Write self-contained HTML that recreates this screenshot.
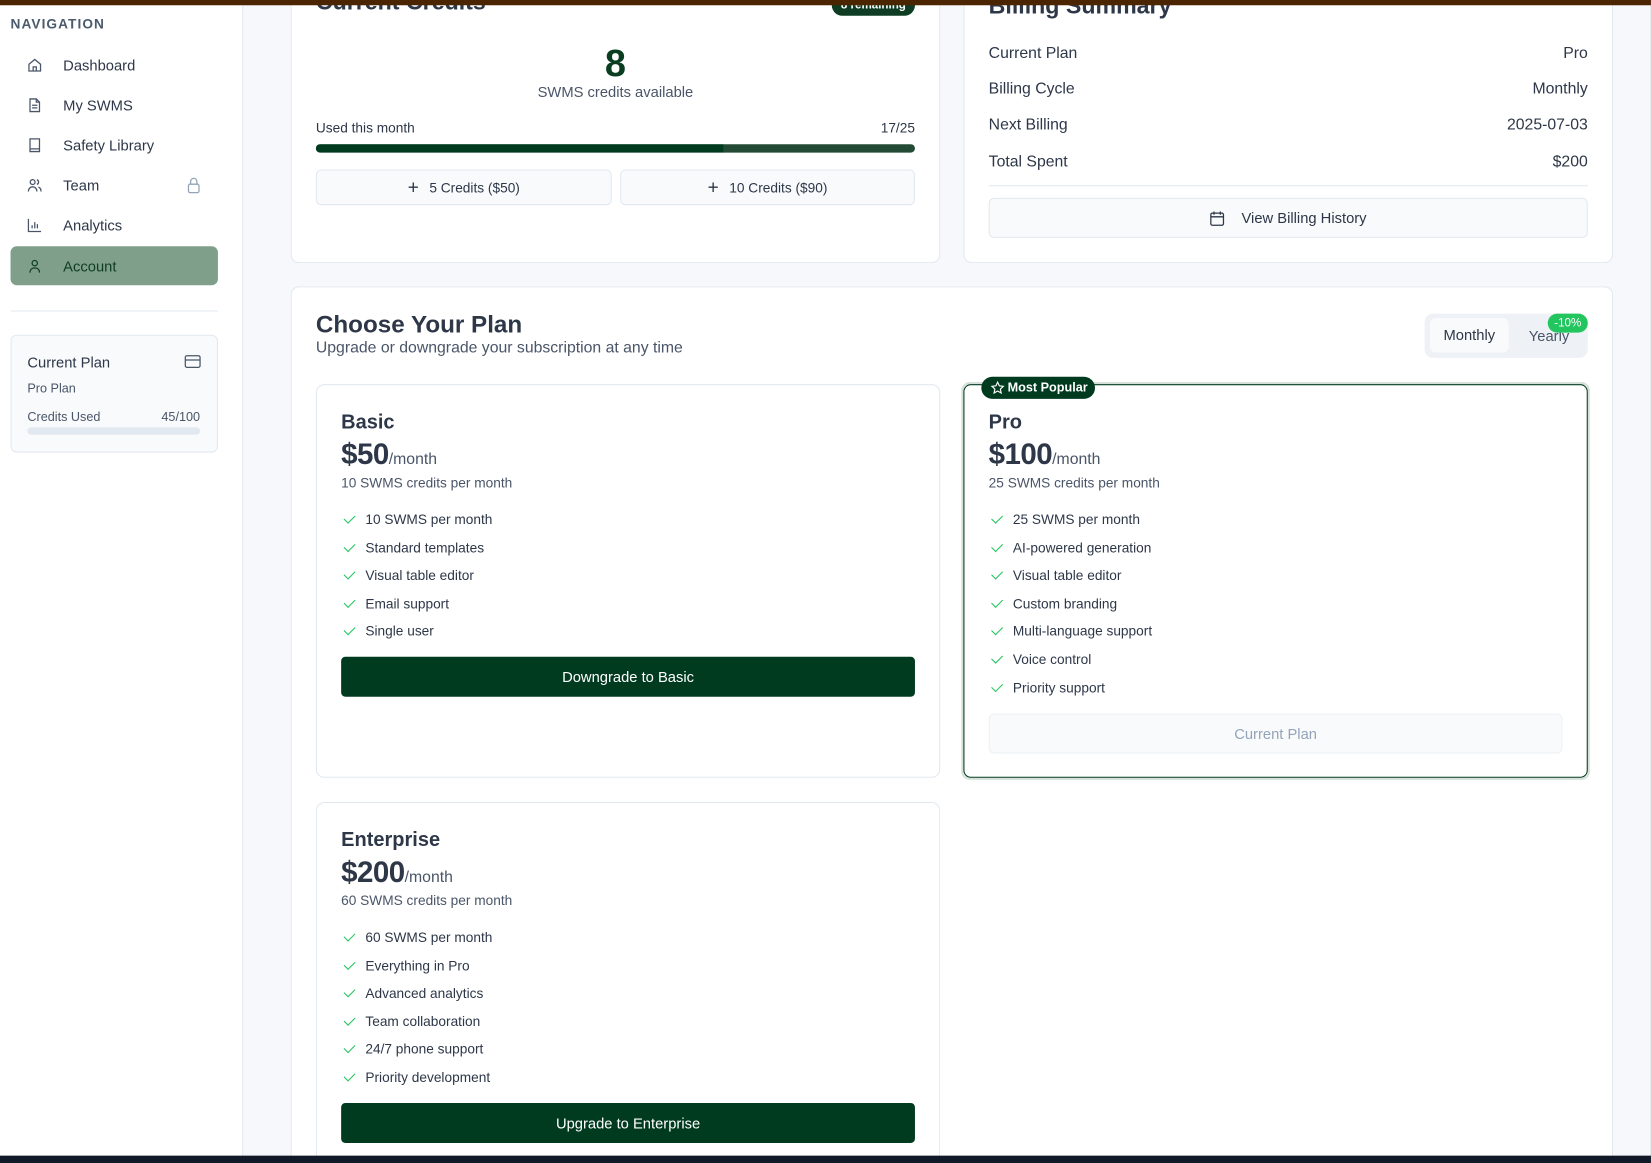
<!DOCTYPE html>
<html><head><meta charset="utf-8">
<style>
*{box-sizing:border-box;margin:0;padding:0}
html,body{width:1651px;height:1163px;overflow:hidden;background:#111827;font-family:"Liberation Sans",sans-serif;color:#2d3748}
#w{position:absolute;left:0;top:0;width:1568px;height:1105px;transform:scale(1.0529,1.0525);transform-origin:0 0;background:#f7f8fb;overflow:hidden}
.a{position:absolute}
.sb{left:0;top:0;width:231px;height:1105px;background:#fff;border-right:1px solid #e2e8f0}
.nav{left:10px;width:197px;height:38px;border-radius:6px;font-size:14px;color:#2d3748;line-height:38px;padding-left:50px}
.nav svg{position:absolute;left:16px;top:12px}
.card{background:#fff;border:1px solid #e2e8f0;border-radius:8px}
.row{left:939px;width:569px;font-size:15px;color:#2d3748;display:flex;justify-content:space-between}
.btn2{background:#f8fafc;border:1px solid #e2e8f0;border-radius:5px;font-size:13px;color:#2d3748;display:flex;align-items:center;justify-content:center;gap:10px}
.pt{font-size:19px;font-weight:bold;color:#2d3748}
.pr{font-size:28px;font-weight:bold;color:#2d3748;letter-spacing:-0.5px}
.pr span{font-size:15px;font-weight:normal;color:#4a5568;letter-spacing:0}
.ps{font-size:13px;color:#4a5568}
.f{font-size:13px;color:#2d3748;height:26.6px;line-height:26.6px;padding-left:23px;position:relative}
.f:before{content:"";position:absolute;left:3px;top:8px;width:9px;height:5px;border-left:1.5px solid #22c55e;border-bottom:1.5px solid #22c55e;transform:rotate(-45deg)}
.gb{background:#003b20;color:#fff;border-radius:4px;font-size:14px;display:flex;align-items:center;justify-content:center}
</style></head><body><div id="w">
<div class="a sb"></div>
<div class="a" style="left:10px;top:15px;font-size:13px;font-weight:bold;letter-spacing:1px;color:#4b5b6e">NAVIGATION</div>
<div class="a nav" style="top:43px"><svg width="14" height="14" viewBox="0 0 14 14" fill="none" stroke="#4a5568" stroke-width="1.2"><path d="M1.5 6L7 1.5 12.5 6V12.5H1.5Z M5.5 12.5V8.5H8.5V12.5"/></svg>Dashboard</div>
<div class="a nav" style="top:81px"><svg width="14" height="14" viewBox="0 0 14 14" fill="none" stroke="#4a5568" stroke-width="1.2"><path d="M2.5 1h6l3 3v9h-9z M8.5 1v3h3 M4.5 7h5 M4.5 9.5h5"/></svg>My SWMS</div>
<div class="a nav" style="top:119px"><svg width="14" height="14" viewBox="0 0 14 14" fill="none" stroke="#4a5568" stroke-width="1.2"><path d="M2.5 1h9v12h-9z M2.5 10.5h9"/></svg>Safety Library</div>
<div class="a nav" style="top:157px"><svg width="14" height="14" viewBox="0 0 14 14" fill="none" stroke="#4a5568" stroke-width="1.2"><circle cx="5" cy="4" r="2.3"/><path d="M1 13c0-3 2-4.5 4-4.5s4 1.5 4 4.5 M9 1.8a2.3 2.3 0 010 4.4 M10.5 8.8c1.5.5 2.5 2 2.5 4.2"/></svg>Team<svg style="left:167px;top:11px" width="14" height="16" viewBox="0 0 14 16" fill="none" stroke="#94a3b8" stroke-width="1.2"><rect x="2" y="7" width="10" height="8" rx="1.5"/><path d="M4 7V4.5a3 3 0 016 0V7"/></svg></div>
<div class="a nav" style="top:195px"><svg width="14" height="14" viewBox="0 0 14 14" fill="none" stroke="#4a5568" stroke-width="1.2"><path d="M1 1v12h12 M4.5 10V7 M7 10V4 M9.5 10V6"/></svg>Analytics</div>
<div class="a nav" style="top:234px;height:37px;background:#7f9f8a;color:#0f3d24"><svg width="14" height="14" viewBox="0 0 14 14" fill="none" stroke="#0f3d24" stroke-width="1.2"><circle cx="7" cy="4" r="2.5"/><path d="M2.5 13c0-3 2-4.5 4.5-4.5s4.5 1.5 4.5 4.5"/></svg>Account</div>
<div class="a" style="left:10px;top:295px;width:197px;height:1px;background:#e2e8f0"></div>
<div class="a" style="left:10px;top:318px;width:197px;height:112px;background:#f8fafc;border:1px solid #e2e8f0;border-radius:6px"></div>
<div class="a" style="left:26px;top:336px;font-size:14px">Current Plan</div>
<svg class="a" style="left:175px;top:337px" width="16" height="13" viewBox="0 0 16 13" fill="none" stroke="#4a5568" stroke-width="1.2"><rect x="1" y="1" width="14" height="11" rx="1.5"/><path d="M1 5h14"/></svg>
<div class="a" style="left:26px;top:362px;font-size:12px;color:#4a5568">Pro Plan</div>
<div class="a" style="left:26px;top:389px;width:164px;font-size:12px;color:#4a5568;display:flex;justify-content:space-between"><span>Credits Used</span><span>45/100</span></div>
<div class="a" style="left:26px;top:406px;width:164px;height:7px;border-radius:4px;background:#e2e8f0"></div>

<div class="a card" style="left:276px;top:0;width:617px;height:250px;border-top:none;border-radius:0 0 8px 8px"></div>
<div class="a" style="left:300px;top:-11px;font-size:22px;font-weight:bold">Current Credits</div>
<div class="a" style="left:790px;top:0;width:79px;height:15px;border-radius:0 0 10px 10px;background:#0f3d24;color:#fff;font-size:11px;font-weight:bold;text-align:center;line-height:10px;overflow:hidden">8 remaining</div>
<div class="a" style="left:300px;top:39px;width:569px;text-align:center;font-size:36px;font-weight:bold;color:#0b3d20">8</div>
<div class="a" style="left:300px;top:79px;width:569px;text-align:center;font-size:14px;color:#4a5568">SWMS credits available</div>
<div class="a" style="left:300px;top:114px;width:569px;font-size:13px;display:flex;justify-content:space-between"><span>Used this month</span><span>17/25</span></div>
<div class="a" style="left:300px;top:137px;width:569px;height:8px;border-radius:4px;background:#234a35;overflow:hidden"><div style="width:387px;height:8px;background:#003b20"></div></div>
<div class="a btn2" style="left:300px;top:161px;width:281px;height:34px"><span style="font-size:18px;font-weight:300">+</span>5 Credits ($50)</div>
<div class="a btn2" style="left:589px;top:161px;width:280px;height:34px"><span style="font-size:18px;font-weight:300">+</span>10 Credits ($90)</div>

<div class="a card" style="left:915px;top:0;width:617px;height:250px;border-top:none;border-radius:0 0 8px 8px"></div>
<div class="a" style="left:939px;top:-7px;font-size:22px;font-weight:bold">Billing Summary</div>
<div class="a row" style="top:42px"><span>Current Plan</span><span>Pro</span></div>
<div class="a row" style="top:76px"><span>Billing Cycle</span><span>Monthly</span></div>
<div class="a row" style="top:110px"><span>Next Billing</span><span>2025-07-03</span></div>
<div class="a row" style="top:145px"><span>Total Spent</span><span>$200</span></div>
<div class="a" style="left:939px;top:176px;width:569px;height:1px;background:#e2e8f0"></div>
<div class="a btn2" style="left:939px;top:188px;width:569px;height:38px;font-size:14px;gap:16px"><svg width="14" height="15" viewBox="0 0 14 15" fill="none" stroke="#2d3748" stroke-width="1.2"><rect x="1" y="2.5" width="12" height="11.5" rx="1.5"/><path d="M1 6h12 M4 1v3 M10 1v3"/></svg>View Billing History</div>

<div class="a card" style="left:276px;top:272px;width:1256px;height:833px;border-bottom:none;border-radius:8px 8px 0 0"></div>
<div class="a" style="left:300px;top:295px;font-size:23px;font-weight:bold">Choose Your Plan</div>
<div class="a" style="left:300px;top:322px;font-size:15px;color:#4a5568">Upgrade or downgrade your subscription at any time</div>
<div class="a" style="left:1353px;top:298px;width:155px;height:42px;border-radius:8px;background:#eef1f5"></div>
<div class="a" style="left:1358px;top:302px;width:75px;height:33px;border-radius:6px;background:#f8fafc;font-size:14px;text-align:center;line-height:33px">Monthly</div>
<div class="a" style="left:1452px;top:311px;font-size:14px;color:#4a5568">Yearly</div>
<div class="a" style="left:1470px;top:298px;width:38px;height:18px;border-radius:9px;background:#22c55e;color:#fff;font-size:11px;text-align:center;line-height:18px">-10%</div>

<div class="a card" style="left:300px;top:365px;width:593px;height:374px"></div>
<div class="a" style="left:324px;top:391px"><div class="pt">Basic</div><div class="pr" style="margin-top:3px">$50<span>/month</span></div><div class="ps" style="margin-top:3px">10 SWMS credits per month</div>
<div style="margin-top:15px"><div class="f">10 SWMS per month</div><div class="f">Standard templates</div><div class="f">Visual table editor</div><div class="f">Email support</div><div class="f">Single user</div></div></div>
<div class="a gb" style="left:324px;top:624px;width:545px;height:38px">Downgrade to Basic</div>

<div class="a" style="left:913px;top:363px;width:597px;height:378px;border-radius:8px;border:2px solid #d4e0d8"></div>
<div class="a" style="left:915px;top:365px;width:593px;height:374px;border-radius:7px;border:1.5px solid #003b20;background:#fff"></div>
<div class="a" style="left:932px;top:358px;width:108px;height:21px;border-radius:11px;background:#003b20;color:#fff;font-size:12px;font-weight:bold;line-height:21px;padding-left:25px"><svg style="position:absolute;left:9px;top:4px" width="13" height="13" viewBox="0 0 24 24" fill="none" stroke="#fff" stroke-width="2"><path d="M12 2l3 6.5 7 .8-5.2 4.8 1.4 7L12 17.6 5.8 21.1l1.4-7L2 9.3l7-.8z"/></svg>Most Popular</div>
<div class="a" style="left:939px;top:391px"><div class="pt">Pro</div><div class="pr" style="margin-top:3px">$100<span>/month</span></div><div class="ps" style="margin-top:3px">25 SWMS credits per month</div>
<div style="margin-top:15px"><div class="f">25 SWMS per month</div><div class="f">AI-powered generation</div><div class="f">Visual table editor</div><div class="f">Custom branding</div><div class="f">Multi-language support</div><div class="f">Voice control</div><div class="f">Priority support</div></div></div>
<div class="a btn2" style="left:939px;top:678px;width:545px;height:38px;font-size:14px;color:#94a3b8;border-color:#edf0f4">Current Plan</div>

<div class="a card" style="left:300px;top:762px;width:593px;height:343px;border-bottom:none;border-radius:8px 8px 0 0"></div>
<div class="a" style="left:324px;top:788px"><div class="pt">Enterprise</div><div class="pr" style="margin-top:3px">$200<span>/month</span></div><div class="ps" style="margin-top:3px">60 SWMS credits per month</div>
<div style="margin-top:15px"><div class="f">60 SWMS per month</div><div class="f">Everything in Pro</div><div class="f">Advanced analytics</div><div class="f">Team collaboration</div><div class="f">24/7 phone support</div><div class="f">Priority development</div></div></div>
<div class="a gb" style="left:324px;top:1048px;width:545px;height:38px">Upgrade to Enterprise</div>

<div class="a" style="left:0;top:0;width:1568px;height:5px;background:#4a2500"></div>
<div class="a" style="left:0;top:1098px;width:1568px;height:7px;background:#111827"></div>
</div></body></html>
